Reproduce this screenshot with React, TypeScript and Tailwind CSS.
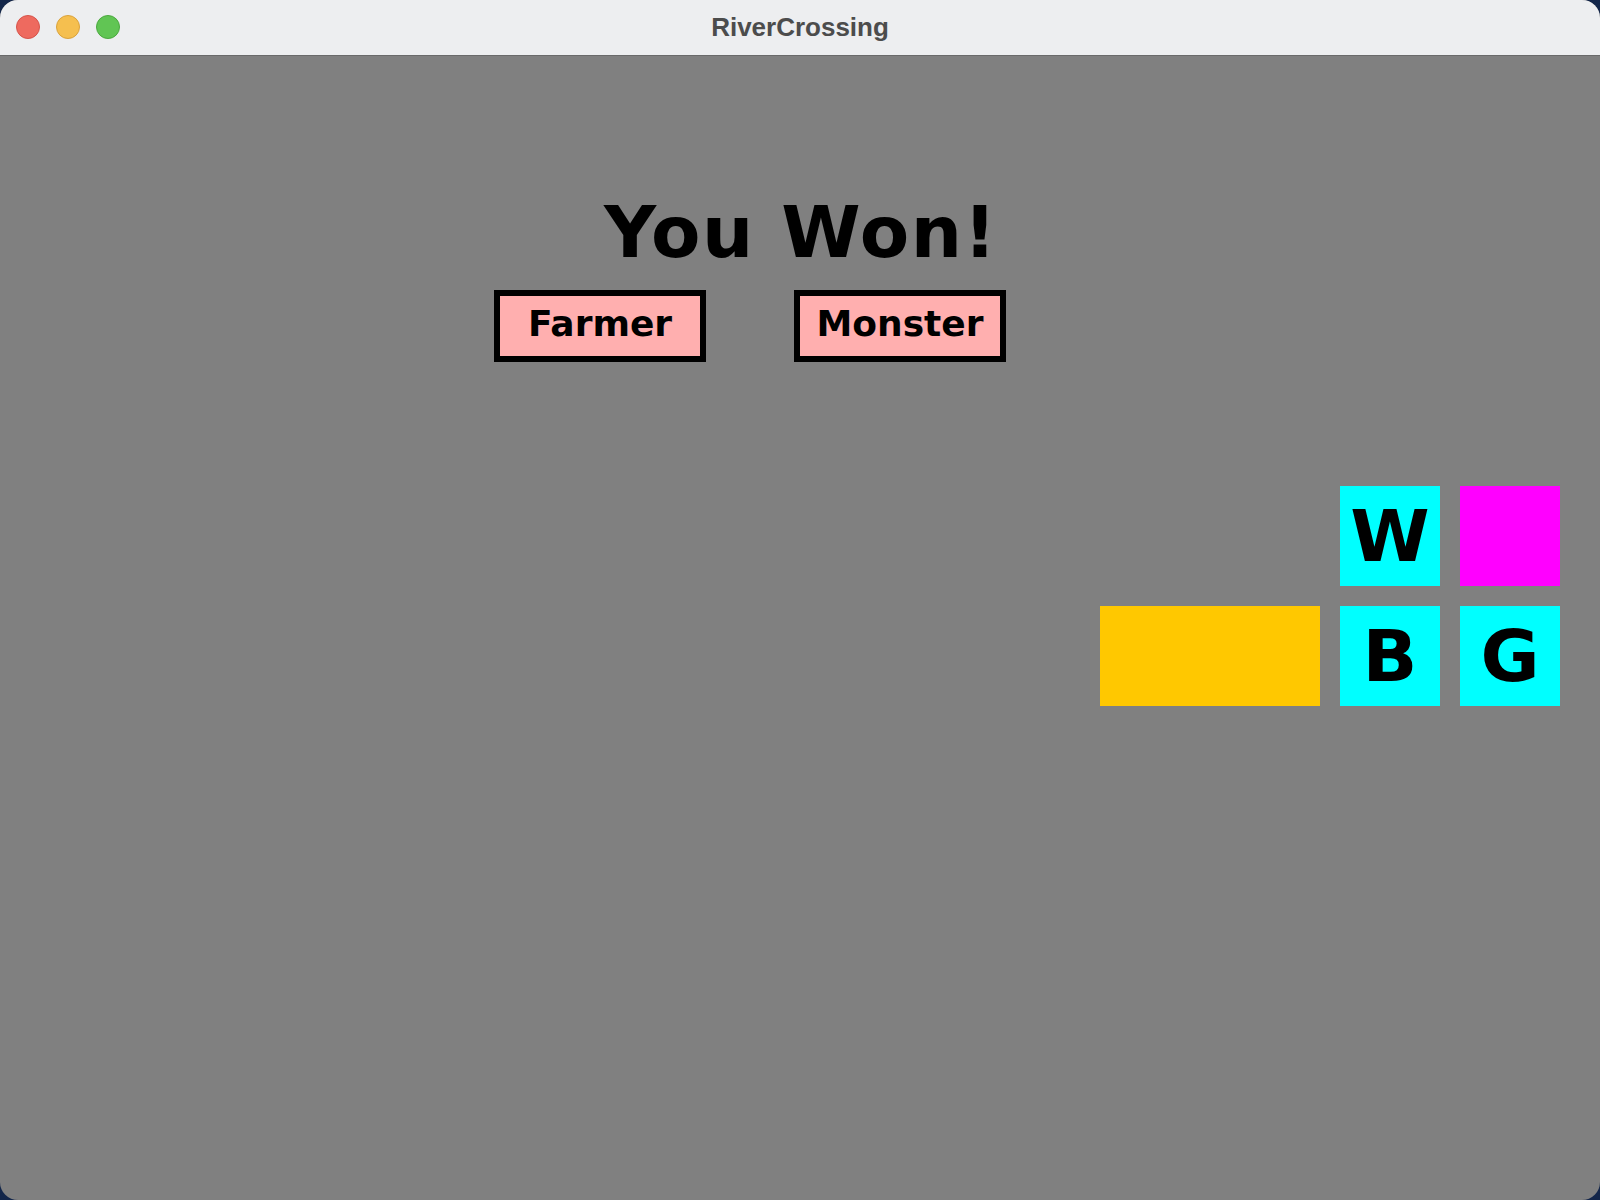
const lights = [
  { bg: "bg-[#ee6a5f]", ring: "border-[#d5544b]" },
  { bg: "bg-[#f5bf4f]", ring: "border-[#d9a23d]" },
  { bg: "bg-[#61c554]", ring: "border-[#4ca83f]" },
];

const gameFont = { fontFamily: '"DejaVu Sans", Verdana, sans-serif' };

function PlayerButton({ label }: { label: string }) {
  return (
    <div className="w-[212px] h-[72px] border-[6px] border-black bg-[#ffafaf] flex items-center justify-center pb-[5px]">
      <span className="text-[36px] font-bold leading-none text-black">{label}</span>
    </div>
  );
}

function Tile({ color, letter }: { color: string; letter?: string }) {
  return (
    <div className={`h-[100px] flex items-center justify-center ${color}`}>
      {letter && <span className="text-[72px] font-bold leading-none text-black">{letter}</span>}
    </div>
  );
}

export default function App() {
  return (
    <div className="w-[1600px] h-[1200px] bg-[#13264a]">
      <div className="w-full h-full rounded-[18px] overflow-hidden flex flex-col bg-[#808080]">
        {/* title bar */}
        <div className="relative h-[56px] shrink-0 bg-[#edeef0] border-b border-[#6a6a6a] flex items-center justify-center">
          <div className="absolute left-[16px] top-[15px] flex gap-[16px]">
            {lights.map((l, i) => (
              <div key={i} className={`w-[24px] h-[24px] rounded-full border ${l.bg} ${l.ring}`} />
            ))}
          </div>
          <span
            className="text-[26px] font-bold text-[#4c4c4c] leading-none -mt-[2px]"
            style={{ fontFamily: '"Liberation Sans", Arial, sans-serif' }}
          >
            RiverCrossing
          </span>
        </div>

        {/* game area */}
        <div className="flex-1 flex flex-col" style={gameFont}>
          <h1 className="mt-[140px] pl-[604px] text-[72px] font-bold leading-[72px] tracking-[1.5px] text-black">
            You Won!
          </h1>

          <div className="mt-[22px] pl-[494px] flex gap-[88px]">
            <PlayerButton label="Farmer" />
            <PlayerButton label="Monster" />
          </div>

          <div className="mt-[124px] ml-[1100px] grid grid-cols-[220px_100px_100px] gap-[20px] w-[460px]">
            <div />
            <Tile color="bg-[#00ffff]" letter="W" />
            <Tile color="bg-[#ff00ff]" />
            <Tile color="bg-[#ffc800]" />
            <Tile color="bg-[#00ffff]" letter="B" />
            <Tile color="bg-[#00ffff]" letter="G" />
          </div>
        </div>
      </div>
    </div>
  );
}
